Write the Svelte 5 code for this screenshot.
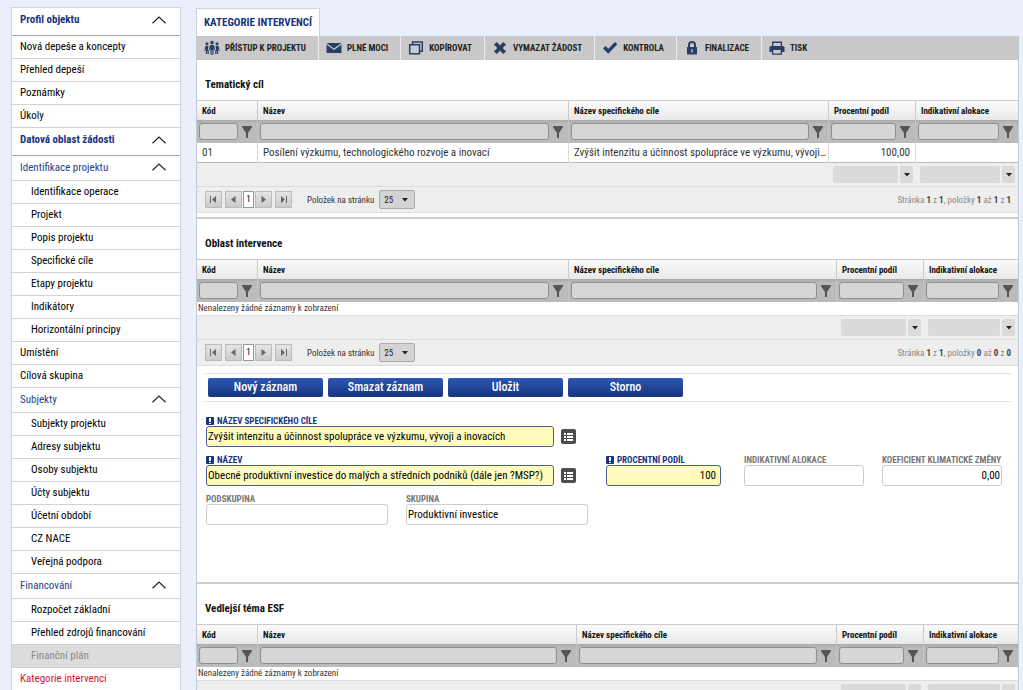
<script lang="ts">
  type Item = { label: string; kind?: "head" | "group" | "sub" | "disabled" | "current" };

  const menu: Item[] = [
    { label: "Profil objektu", kind: "head" },
    { label: "Nová depeše a koncepty" },
    { label: "Přehled depeší" },
    { label: "Poznámky" },
    { label: "Úkoly" },
    { label: "Datová oblast žádosti", kind: "head" },
    { label: "Identifikace projektu", kind: "group" },
    { label: "Identifikace operace", kind: "sub" },
    { label: "Projekt", kind: "sub" },
    { label: "Popis projektu", kind: "sub" },
    { label: "Specifické cíle", kind: "sub" },
    { label: "Etapy projektu", kind: "sub" },
    { label: "Indikátory", kind: "sub" },
    { label: "Horizontální principy", kind: "sub" },
    { label: "Umístění" },
    { label: "Cílová skupina" },
    { label: "Subjekty", kind: "group" },
    { label: "Subjekty projektu", kind: "sub" },
    { label: "Adresy subjektu", kind: "sub" },
    { label: "Osoby subjektu", kind: "sub" },
    { label: "Účty subjektu", kind: "sub" },
    { label: "Účetní období", kind: "sub" },
    { label: "CZ NACE", kind: "sub" },
    { label: "Veřejná podpora", kind: "sub" },
    { label: "Financování", kind: "group" },
    { label: "Rozpočet základní", kind: "sub" },
    { label: "Přehled zdrojů financování", kind: "sub" },
    { label: "Finanční plán", kind: "disabled" },
    { label: "Kategorie intervencí", kind: "current" },
  ];

  const tools = [
    { icon: "people", label: "Přístup k projektu" },
    { icon: "mail", label: "Plné moci" },
    { icon: "copy", label: "Kopírovat" },
    { icon: "cross", label: "Vymazat žádost" },
    { icon: "check", label: "Kontrola" },
    { icon: "lock", label: "Finalizace" },
    { icon: "print", label: "Tisk" },
  ];

  const columns = ["Kód", "Název", "Název specifického cíle", "Procentní podíl", "Indikativní alokace"];

  const goalRows = [
    ["01", "Posílení výzkumu, technologického rozvoje a inovací", "Zvýšit intenzitu a účinnost spolupráce ve výzkumu, vývoji...", "100,00", ""],
  ];

  const actions = ["Nový záznam", "Smazat záznam", "Uložit", "Storno"];

  let specificGoal = $state("Zvýšit intenzitu a účinnost spolupráce ve výzkumu, vývoji a inovacích");
  let name = $state("Obecné produktivní investice do malých a středních podniků (dále jen ?MSP?)");
  let share = $state("100");
  let allocation = $state("");
  let coefficient = $state("0,00");
  let subgroup = $state("");
  let group = $state("Produktivní investice");
</script>

{#snippet toolIcon(kind: string)}
  <svg class="tool-icon" viewBox="0 0 16 16" aria-hidden="true">
    {#if kind === "people"}
      <circle cx="8" cy="2.6" r="1.8" />
      <circle cx="3" cy="3.8" r="1.5" />
      <circle cx="13" cy="3.8" r="1.5" />
      <path d="M6 5h4l1 5-.9.3-.6-2V15H8.400v-4.400h-.8V15H6.500V8.300l-.6 2-.9-.3z" />
      <path d="M1.500 5.800h3L4 9.500l.8 1V14H3.500v-3H3v3H1.800V8.500l-.5 2.200-1-.3z" />
      <path d="M14.500 5.800h-3l.5 3.700-.8 1V14h1.300v-3h.5v3h1.200V8.500l.5 2.200 1-.3z" />
    {:else if kind === "mail"}
      <path d="M.5 3h15L8 8.600z" />
      <path d="M.5 4.500 8 10l7.500-5.500V13H.5z" />
    {:else if kind === "copy"}
      <path fill="none" stroke="#2a3f66" stroke-width="1.5" d="M4.500 4.200V2h9.800v9.200H12M1.700 4.700h9.800v9H1.700z" />
    {:else if kind === "cross"}
      <path d="M2 4.600 4.800 2 8 5.200 11.200 2 14 4.600 10.800 8l3.200 3.400-2.800 2.600L8 10.800 4.800 14 2 11.400 5.200 8z" />
    {:else if kind === "check"}
      <path d="m1 8.400 2.600-2.300 2.700 2.700L13 2l2.300 2.200-9 9.500z" />
    {:else if kind === "lock"}
      <path fill-rule="evenodd" d="M3 7h1V5a4 4 0 0 1 8 0v2h1v7.500H3zm3 0h4V5a2 2 0 0 0-4 0zm1.300 2.200v3.200h1.400V9.200z" />
    {:else}
      <path fill-rule="evenodd" d="M3 1.500h10V6h1.200L15.500 7v5H13v2.700H3V12H.5V7l1.300-1H3zM4.300 3v3h7.400V3zM4.300 10v3.400h7.400V10z" />
    {/if}
  </svg>
{/snippet}

{#snippet chevron()}
  <svg class="chevron" viewBox="0 0 14 8" aria-hidden="true">
    <path d="M.5 7.300 7 1l6.500 6.300" />
  </svg>
{/snippet}

{#snippet arrow()}
  <svg class="arrow" viewBox="0 0 6 4" aria-hidden="true"><path d="M0 0h6L3 3.600z" /></svg>
{/snippet}

{#snippet grid(title: string, variant: string, rows: string[][])}
  <h2>{title}</h2>
  <table class={variant} aria-label={title}>
    <colgroup>
      <col class="c-code" />
      <col />
      <col class="c-goal" />
      <col class="c-share" />
      <col class="c-alloc" />
    </colgroup>
    <thead>
      <tr class="names">
        {#each columns as col}
          <th scope="col">{col}</th>
        {/each}
      </tr>
      <tr class="filters">
        {#each columns as col}
          <td>
            <div class="filter">
              <input type="text" aria-label={"Filtr: " + col} />
              <button type="button" aria-label={"Filtrovat " + col}>
                <svg viewBox="0 0 10 12" aria-hidden="true"><path d="M0 0h10v1L6 7v5H4V7L0 1z" /></svg>
              </button>
            </div>
          </td>
        {/each}
      </tr>
    </thead>
    <tbody>
      {#each rows as row}
        <tr class="data">
          {#each row as cell, i}
            <td class:number={i > 2}>{cell}</td>
          {/each}
        </tr>
      {:else}
        <tr class="empty"><td colspan="5">Nenalezeny žádné záznamy k zobrazení</td></tr>
      {/each}
    </tbody>
    <tfoot>
      <tr>
        <td colspan="3"></td>
        {#each columns.slice(3) as col}
          <td>
            <div class="summary">
              <span></span>
              <button type="button" aria-label={"Souhrn: " + col}>{@render arrow()}</button>
            </div>
          </td>
        {/each}
      </tr>
    </tfoot>
  </table>
  <div class="pager">
    <button class="step" type="button" aria-label="První">
      <svg viewBox="0 0 9 9"><path d="M1 1h1v7H1zM7 1v7L3 4.500z" /></svg>
    </button>
    <button class="step" type="button" aria-label="Předchozí">
      <svg viewBox="0 0 9 9"><path d="M6.500 1v7L2 4.500z" /></svg>
    </button>
    <span class="page">1</span>
    <button class="step" type="button" aria-label="Další">
      <svg viewBox="0 0 9 9"><path d="M2.500 1v7L7 4.500z" /></svg>
    </button>
    <button class="step" type="button" aria-label="Poslední">
      <svg viewBox="0 0 9 9"><path d="M2 1v7l4-3.500zM7 1h1v7H7z" /></svg>
    </button>
    <label class="size">
      Položek na stránku
      <span class="select">
        <select>
          <option>25</option>
          <option>50</option>
        </select>
        {@render arrow()}
      </span>
    </label>
    <span class="range">
      Stránka <b>1</b> z <b>1</b>, položky <b>{rows.length}</b> až <b>{rows.length}</b> z <b>{rows.length}</b>
    </span>
  </div>
{/snippet}

{#snippet required()}
  <svg class="mark" viewBox="0 0 8 8" aria-hidden="true">
    <rect width="8" height="8" rx="1" fill="#17347f" />
    <path d="M3 1h2v4H3zM3 6h2v1H3z" fill="#fff" />
  </svg>
{/snippet}

{#snippet lookup(label: string)}
  <button class="lookup" type="button" aria-label={label}>
    <svg viewBox="0 0 9 8" aria-hidden="true">
      <path d="M0 0h2v2H0zM3 0h6v2H3zM0 3h2v2H0zM3 3h6v2H3zM0 6h2v2H0zM3 6h6v2H3z" />
    </svg>
  </button>
{/snippet}

<div class="page-wrap">
  <nav>
    {#each menu as item}
      {#if item.kind === "head" || item.kind === "group"}
        <button class="row {item.kind}" type="button">
          {item.label}
          {@render chevron()}
        </button>
      {:else}
        <a class="row {item.kind ?? ''}" href="#top">{item.label}</a>
      {/if}
    {/each}
  </nav>

  <main>
    <h1>Kategorie intervencí</h1>
    <div class="content">
      <div class="toolbar">
        {#each tools as tool}
          <button type="button">
            {@render toolIcon(tool.icon)}
            {tool.label}
          </button>
        {/each}
      </div>

      <section>
        {@render grid("Tematický cíl", "goal-grid", goalRows)}
      </section>

      <section class="ruled">
        {@render grid("Oblast intervence", "area-grid", [])}

        <div class="actions">
          {#each actions as action}
            <button type="button">{action}</button>
          {/each}
        </div>

        <form>
          <div class="line">
            <div class="field long">
              <label class="must" for="goal">{@render required()}Název specifického cíle</label>
              <input class="must" id="goal" bind:value={specificGoal} />
            </div>
            {@render lookup("Vybrat specifický cíl")}
          </div>
          <div class="line">
            <div class="field long">
              <label class="must" for="name">{@render required()}Název</label>
              <input class="must" id="name" bind:value={name} />
            </div>
            {@render lookup("Vybrat název")}
            <div class="numbers">
              <div class="field">
                <label class="must" for="share">{@render required()}Procentní podíl</label>
                <input class="must" id="share" bind:value={share} />
              </div>
              <div class="field">
                <label for="allocation">Indikativní alokace</label>
                <input id="allocation" bind:value={allocation} />
              </div>
              <div class="field">
                <label for="coefficient">Koeficient klimatické změny</label>
                <input id="coefficient" bind:value={coefficient} />
              </div>
            </div>
          </div>
          <div class="line groups">
            <div class="field">
              <label for="subgroup">Podskupina</label>
              <input id="subgroup" bind:value={subgroup} />
            </div>
            <div class="field">
              <label for="group">Skupina</label>
              <input id="group" bind:value={group} />
            </div>
          </div>
        </form>
      </section>

      <section class="ruled">
        {@render grid("Vedlejší téma ESF", "topic-grid", [])}
      </section>
    </div>
  </main>
</div>

<style>
  :global(body) {
    background: #ebeffb;
  }

  .page-wrap,
  .page-wrap :is(button, input, select) {
    font-family: "Roboto Condensed", "Liberation Sans Narrow", Roboto, sans-serif;
    box-sizing: border-box;
  }
  .page-wrap {
    display: flex;
    align-items: flex-start;
    gap: 15px;
    height: 100vh;
    padding: 7px 4px 0 11px;
    overflow-y: auto;
    scrollbar-width: none;
    font-size: 11px;
    color: #111;
  }
  button {
    margin: 0;
    padding: 0;
    border: 0;
    background: none;
    color: inherit;
    cursor: pointer;
  }

  nav {
    flex: 0 0 170px;
    box-sizing: border-box;
    border: 1px solid #d3d5dc;
    border-bottom: 0;
    background: #fff;
  }
  .row {
    display: flex;
    align-items: center;
    justify-content: space-between;
    box-sizing: border-box;
    width: 100%;
    height: 23px;
    padding: 0 14px 1px 8px;
    border-bottom: 1px solid #d2d2d2;
    color: #000;
    font-size: 11px;
    text-decoration: none;
  }
  .head {
    height: 28px;
    padding-bottom: 4px;
    border-bottom: 1px solid #aaa;
    color: #17347f;
    font-weight: 700;
  }
  .group {
    height: 25px;
    padding-bottom: 2px;
    color: #24428c;
  }
  .sub,
  .disabled {
    padding-left: 19px;
  }
  .disabled {
    background: #dcdcdc;
    color: #888;
  }
  .current {
    color: #d8102e;
  }
  .chevron {
    width: 14px;
    height: 8px;
    fill: none;
    stroke: #222;
    stroke-width: 1.2;
  }

  main {
    flex: 1;
    min-width: 0;
  }
  h1 {
    display: inline-block;
    box-sizing: border-box;
    height: 28px;
    margin: 1px 0 0;
    padding: 0 7px;
    border: 1px solid #cfd3df;
    border-bottom: 0;
    background: #fff;
    color: #17347f;
    font-size: 11px;
    font-weight: 700;
    line-height: 27px;
    text-transform: uppercase;
    vertical-align: top;
  }
  .content {
    border: 1px solid #c3c7d6;
    border-top: 0;
    background: #fff;
  }

  .toolbar {
    display: flex;
    height: 24px;
    background: #c9c9c9;
  }
  .toolbar button {
    display: flex;
    align-items: center;
    gap: 5px;
    padding: 0 12px 0 7px;
    border-right: 1px solid #eee;
    font-size: 9px;
    font-weight: 700;
    color: #222;
    text-transform: uppercase;
  }
  .toolbar button:last-child {
    border-right: 0;
  }
  .tool-icon {
    width: 16px;
    height: 16px;
    fill: #2a3f66;
  }

  h2 {
    margin: 0;
    padding: 16px 8px 7px;
    font-size: 11px;
    font-weight: 700;
    line-height: 17px;
  }
  .ruled {
    border-top: 2px solid #ccc;
    margin-top: 4px;
  }

  table {
    width: 100%;
    table-layout: fixed;
    border-collapse: separate;
    border-spacing: 0;
  }
  td,
  th {
    box-sizing: border-box;
    padding: 0;
  }
  .c-code {
    width: 61px;
  }
  .c-goal {
    width: 260px;
  }
  .area-grid .c-goal {
    width: 268px;
  }
  .c-share {
    width: 87px;
  }
  .c-alloc {
    width: 94px;
  }
  .goal-grid .c-alloc {
    width: 102px;
  }
  .names th {
    height: 20px;
    padding: 0 5px;
    border-top: 1px solid #ccc;
    border-right: 1px solid #ccc;
    background: linear-gradient(#fbfbfb, #e8e8e8);
    font-size: 9px;
    font-weight: 700;
    text-align: left;
  }
  .filters td {
    height: 23px;
    background: linear-gradient(#aaa, #bbb 4px);
    border-right: 1px solid #c4c4c4;
  }
  .filter {
    display: flex;
    align-items: center;
    gap: 4px;
    padding: 0 5px 0 2px;
  }
  .filter input {
    flex: 1;
    min-width: 0;
    height: 17px;
    padding: 0 3px;
    border: 1px solid #8e8e8e;
    border-radius: 3px;
    background: #d6d6d6;
    font-size: 11px;
  }
  .filter svg {
    display: block;
    width: 10px;
    height: 12px;
    fill: #555;
  }
  .data td {
    height: 20px;
    padding: 0 0 0 5px;
    border-right: 1px solid #ddd;
    border-bottom: 1px solid #bbb;
    color: #333;
    font-size: 11px;
    overflow: hidden;
    text-overflow: ellipsis;
    white-space: nowrap;
  }
  tr :is(th, td):last-child {
    border-right: 0;
  }
  .data .number {
    padding-right: 5px;
    text-align: right;
  }
  .empty td {
    height: 14px;
    padding-left: 1px;
    border-bottom: 1px solid #ddd;
    color: #333;
    font-size: 9px;
    line-height: 13px;
  }
  tfoot td {
    height: 24px;
    border-bottom: 1px solid #ddd;
    background: #eee;
  }
  .summary {
    display: flex;
    gap: 2px;
    height: 17px;
    padding: 0 3px 0 4px;
  }
  .summary span,
  .summary button {
    border-radius: 2px;
    background: #dadada;
  }
  .summary span {
    flex: 1;
  }
  .summary button {
    width: 13px;
  }
  .arrow {
    width: 6px;
    height: 4px;
    fill: #222;
  }
  .summary .arrow {
    display: block;
    margin: 0 auto;
  }

  .pager {
    display: flex;
    align-items: center;
    box-sizing: border-box;
    height: 26px;
    padding: 0 7px 0 8px;
    border-bottom: 1px solid #ddd;
    background: #eee;
    color: #333;
    font-size: 9px;
  }
  .step {
    width: 17px;
    height: 17px;
    border: 1px solid #bbb;
    background: linear-gradient(#e4e4e4, #cbcbcb);
  }
  .step svg {
    display: block;
    width: 9px;
    height: 9px;
    margin: 0 auto;
    fill: #666;
  }
  .step:first-child {
    margin-right: 3px;
  }
  .step:nth-of-type(4) {
    margin-left: 3px;
  }
  .page {
    box-sizing: border-box;
    width: 11px;
    height: 17px;
    margin: 0 1px;
    border: 1px solid #999;
    background: #fff;
    color: #000;
    line-height: 15px;
    text-align: center;
  }
  .size {
    display: flex;
    align-items: center;
    gap: 5px;
    margin-left: 15px;
  }
  .select {
    position: relative;
    display: block;
  }
  .select select {
    display: block;
    width: 36px;
    height: 19px;
    padding: 0 4px;
    border: 1px solid #aaa;
    border-radius: 2px;
    background: #d4d4d4;
    color: #222;
    font-size: 9px;
    appearance: none;
  }
  .select .arrow {
    position: absolute;
    top: 8px;
    right: 7px;
    pointer-events: none;
  }
  .range {
    margin-left: auto;
    color: #888;
  }
  .range b {
    color: #444;
  }

  .actions {
    display: flex;
    gap: 5px;
    margin: 7px 6px 0 8px;
    padding: 4px 3px;
    border-top: 1px solid #e4e4e4;
    border-bottom: 1px solid #e4e4e4;
  }
  .actions button {
    width: 115px;
    height: 19px;
    border-radius: 2px;
    background: linear-gradient(#2d57b4, #17347f);
    color: #fff;
    font-size: 12px;
    font-weight: 500;
    line-height: 19px;
  }

  form {
    display: flex;
    flex-direction: column;
    gap: 8px;
    padding: 14px 16px 53px 9px;
  }
  .line {
    display: flex;
    align-items: flex-end;
  }
  .field {
    display: flex;
    flex-direction: column;
    flex: 0 0 120px;
  }
  .field.long {
    flex-basis: 348px;
  }
  .field label {
    display: flex;
    align-items: center;
    gap: 3px;
    height: 10px;
    color: #777;
    font-size: 9px;
    font-weight: 700;
    text-transform: uppercase;
    white-space: nowrap;
  }
  .field label.must {
    color: #17347f;
  }
  .mark {
    width: 8px;
    height: 8px;
  }
  .field input {
    width: 100%;
    height: 21px;
    padding: 0 1px;
    border: 1px solid #ccc;
    border-radius: 3px;
    background: #fff;
    color: #000;
    font-size: 11px;
  }
  .field input.must {
    border-color: #4a6288;
    background: #fffbbd;
  }
  .lookup {
    display: flex;
    align-items: center;
    justify-content: center;
    width: 15px;
    height: 15px;
    margin: 0 0 3px 7px;
    border-radius: 2px;
    background: #4d4d4d;
  }
  .lookup svg {
    width: 9px;
    height: 8px;
    fill: #fff;
  }
  .numbers {
    display: flex;
    flex: 1;
    justify-content: flex-end;
    gap: 18px;
  }
  .numbers input {
    text-align: right;
  }
  .numbers .field:first-child {
    flex-basis: 115px;
    margin-right: 5px;
  }
  .numbers .field:first-child input {
    padding-right: 4px;
  }
  .groups {
    gap: 18px;
  }
  .groups .field {
    flex-basis: 182px;
  }
</style>
